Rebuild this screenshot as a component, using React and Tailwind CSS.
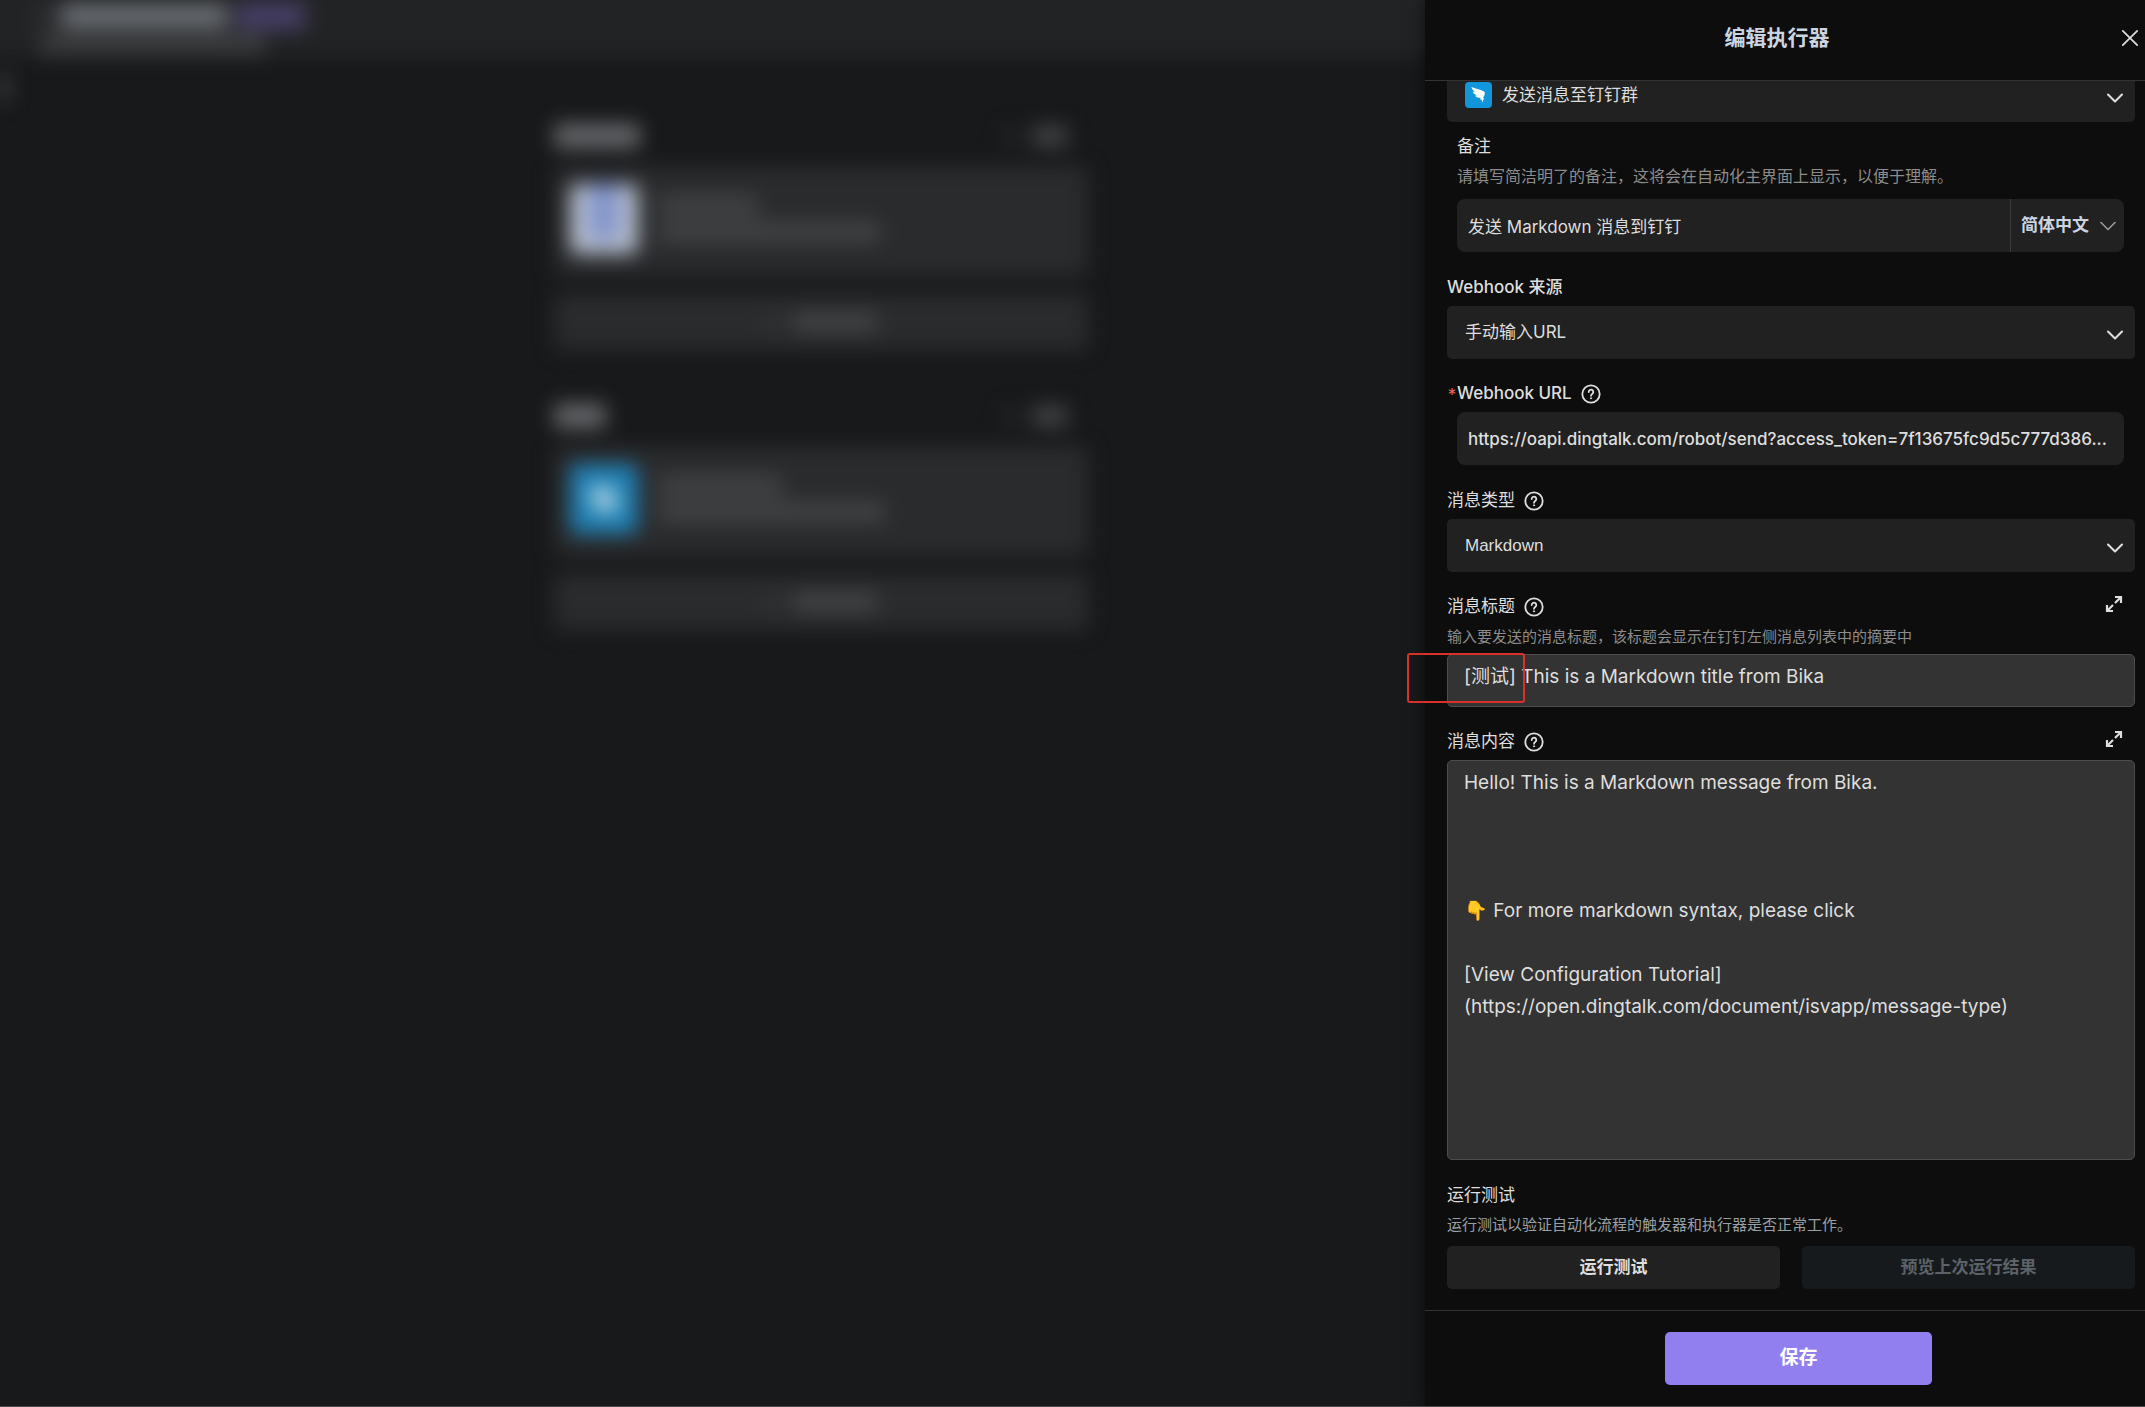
import { ChevronDown } from 'lucide-react';

const fieldBox = 'h-[53px] w-full bg-[#212121] text-[#dedede] outline-none';
const editorBox = 'mt-1.5 w-full rounded-[5px] border border-[#4d4d4d] bg-[#333] px-4 text-[19px] text-[#dedede] outline-none';

const MESSAGE = `Hello! This is a Markdown message from Bika.



👇 For more markdown syntax, please click

[View Configuration Tutorial]
(https://open.dingtalk.com/document/isvapp/message-type)`;

function HelpIcon() {
  return (
    <svg viewBox="0 0 20 20" className="h-5 w-5 shrink-0" fill="none" stroke="currentColor" strokeWidth="1.8" strokeLinecap="round" strokeLinejoin="round" aria-hidden="true">
      <circle cx="10" cy="10" r="8.7" />
      <path d="M7.7 8a2.3 2.3 0 1 1 3.7 1.8c-.9.7-1.4 1-1.4 2" />
      <circle cx="10" cy="14.3" r="0.6" fill="currentColor" strokeWidth="1" />
    </svg>
  );
}

function ExpandButton({ label }) {
  return (
    <button type="button" aria-label={label} className="mr-3 mb-1 text-[#dedede]">
      <svg viewBox="0 0 18 18" className="h-[18px] w-[18px]" fill="none" stroke="currentColor" strokeWidth="2.2" aria-hidden="true">
        <path d="M10 2h6v6M16 2l-6 6M8 16H2v-6M2 16l6-6" />
      </svg>
    </button>
  );
}

function DingTalkIcon() {
  return (
    <svg viewBox="0 0 27 26" className="h-[26px] w-[27px] shrink-0" aria-hidden="true">
      <rect width="27" height="26" rx="4" fill="#1296db" />
      <path
        d="M6.5 4.8C9.5 6.8 15 7.2 19 9.600c1.300.9 1 2.400.3 3.900L18 16l1.100.2-2.300 4.700.2-3.100-2-.2.8-1.800c-2.800.2-4.800-.5-5.800-2.300l2.300-.1C10 12.800 8.300 11.500 7.700 9.700l2.300.2C7.800 8.500 6.700 7 6.500 4.800z"
        fill="#fff"
      />
    </svg>
  );
}

function Label({ htmlFor, help, className = '', children }) {
  return (
    <label htmlFor={htmlFor} className={`flex h-[27px] items-center gap-[9px] pt-0.5 text-[17px] text-[#dedede] ${className}`}>
      {children}
      {help && <HelpIcon />}
    </label>
  );
}

function SelectField({ id, label, icon, value, className = '' }) {
  return (
    <div className="relative">
      <select id={id} aria-label={label} defaultValue={value} className={`${fieldBox} appearance-none rounded-[5px] pr-12 text-[17px] ${icon ? 'pl-[55px]' : 'pl-[18px]'} ${className}`}>
        <option>{value}</option>
      </select>
      {icon && <span className="pointer-events-none absolute top-[13px] left-[18px]">{icon}</span>}
      <ChevronDown className="pointer-events-none absolute top-[15px] right-1.5 h-7 w-7 text-[#dedede]" strokeWidth={1.8} />
    </div>
  );
}

function FlowSection({ titleWidth, icon, lines }) {
  return (
    <section>
      <div className="flex h-8 items-center justify-between pr-5">
        <div className={`h-6 rounded bg-[#66676a] ${titleWidth}`} />
        <div className="flex items-center gap-4">
          <div className="h-4 w-3 rounded bg-[#2a2b2d]" />
          <div className="h-5 w-9 rounded bg-[#434446]" />
        </div>
      </div>
      <div className="mt-[14px] flex h-[110px] items-center gap-5 rounded-lg bg-[#2a2b2d] pb-1 pl-4">
        {icon}
        <div className="space-y-1.5">
          {lines.map((line) => (
            <div key={line} className={`h-5 rounded bg-[#424345] ${line}`} />
          ))}
        </div>
      </div>
      <div className="mt-[18px] flex h-[56px] items-center justify-center gap-4 rounded-lg bg-[#2a2b2d]">
        <div className="h-3 w-3 rounded bg-[#38393b]" />
        <div className="h-5 w-[84px] rounded bg-[#424345]" />
      </div>
    </section>
  );
}

function AutomationBackdrop() {
  return (
    <main className="min-w-0 flex-1 overflow-hidden bg-[#18191b]" aria-hidden="true">
      <div className="h-full blur-[10px]">
        <header className="-mx-6 -mt-6 h-[82px] bg-[#222325] pt-[26px] pl-16">
          <div className="flex items-center gap-2">
            <div className="mr-1 h-5 w-2 rounded bg-[#3d3e40]" />
            <div className="h-6 w-[168px] rounded bg-[#6a6e73]" />
            <div className="h-7 w-[70px] rounded bg-[#443e64]" />
          </div>
          <div className="mt-1 h-5 w-[225px] rounded bg-[#3d3e40]" />
        </header>
        <div className="mt-4 h-7 w-2 bg-[#4a4b4d]" />
        <div className="mx-auto w-[534px] translate-x-[108px] space-y-[50px] pt-[18px]">
          <FlowSection
            titleWidth="w-[86px]"
            icon={
              <div className="flex h-[70px] w-[68px] justify-center rounded-lg bg-[#b8c0ce]">
                <div className="h-14 w-8 bg-[#8496cc]" />
              </div>
            }
            lines={['w-[100px]', 'w-[222px]']}
          />
          <FlowSection
            titleWidth="w-[52px]"
            icon={
              <div className="flex h-[70px] w-[68px] items-center justify-center rounded-lg bg-[#1f80b4]">
                <div className="h-8 w-6 -rotate-45 rounded-full bg-[#9fcbdf]" />
              </div>
            }
            lines={['w-[124px]', 'w-[226px]']}
          />
        </div>
      </div>
    </main>
  );
}

export default function App() {
  return (
    <div className="relative flex h-screen overflow-hidden border-b border-[#4a4a4a] bg-[#18191b] font-['Inter','Noto_Sans_CJK_SC',sans-serif]">
      <AutomationBackdrop />

      <aside className="relative flex w-[720px] shrink-0 flex-col bg-[#0d0d0d] shadow-[0_0_16px_rgba(0,0,0,0.6)]">
        <header className="flex h-[81px] shrink-0 items-center border-b border-[#333] pr-1.5 pb-1 pl-2">
          <h1 className="flex-1 text-center text-[21px] font-bold text-[#cbd5e1]">编辑执行器</h1>
          <button type="button" aria-label="关闭" className="text-[#e0e0e0]">
            <svg viewBox="0 0 18 18" className="h-[18px] w-[18px]" fill="none" stroke="currentColor" strokeWidth="1.7" strokeLinecap="round" aria-hidden="true">
              <path d="M1.8 1.8l14.4 14.4M16.2 1.8L1.8 16.2" />
            </svg>
          </button>
        </header>

        <form id="executor" className="flex min-h-0 flex-1 flex-col overflow-hidden pr-[10px] pl-[22px]">
          <div className="-mt-3 shrink-0">
            <SelectField label="执行器类型" value="发送消息至钉钉群" icon={<DingTalkIcon />} />
          </div>

          <div className="mt-[10px] pr-[11px] pl-[10px]">
            <Label htmlFor="remark">备注</Label>
            <p className="mt-[5px] text-[16px] leading-6 text-[#8c8c8c]">请填写简洁明了的备注，这将会在自动化主界面上显示，以便于理解。</p>
            <div className="mt-[11px] flex">
              <input id="remark" defaultValue="发送 Markdown 消息到钉钉" className={`${fieldBox} min-w-0 flex-1 rounded-l-lg pl-[11px] text-[17px]`} />
              <div className="relative shrink-0 border-l border-[#3a3a3a]">
                <select aria-label="语言" defaultValue="简体中文" className="h-[53px] w-[113px] appearance-none rounded-r-lg bg-[#212121] pl-[10px] text-[17px] font-bold text-[#cbd5e1] outline-none">
                  <option>简体中文</option>
                </select>
                <ChevronDown className="pointer-events-none absolute top-[13px] right-0.5 h-7 w-7 text-[#9a9a9a]" strokeWidth={1.4} />
              </div>
            </div>
          </div>

          <div className="mt-[21px]">
            <Label htmlFor="source" className="mb-1.5 font-medium">Webhook 来源</Label>
            <SelectField id="source" value="手动输入URL" />
          </div>

          <div className="mt-5 pr-[11px]">
            <div className="mb-1.5 flex items-center">
              <span className="w-[10px] pt-1 text-center text-[17px] leading-5 text-[#e5675f]">*</span>
              <Label htmlFor="url" help className="font-medium">Webhook URL</Label>
            </div>
            <div className="pl-[10px]">
              <input id="url" defaultValue="https://oapi.dingtalk.com/robot/send?access_token=7f13675fc9d5c777d386..." className={`${fieldBox} rounded-lg pr-1 pl-[11px] text-[17px] font-medium`} />
            </div>
          </div>

          <div className="mt-[21px]">
            <Label htmlFor="type" help className="mb-1.5">消息类型</Label>
            <SelectField id="type" value="Markdown" className="font-['Liberation_Sans',sans-serif]" />
          </div>

          <div className="mt-5">
            <div className="flex items-center justify-between">
              <Label htmlFor="title" help>消息标题</Label>
              <ExpandButton label="展开消息标题" />
            </div>
            <p className="mt-[7px] text-[15px] leading-[22px] text-[#8c8c8c]">输入要发送的消息标题，该标题会显示在钉钉左侧消息列表中的摘要中</p>
            <input id="title" defaultValue="[测试] This is a Markdown title from Bika" className={`${editorBox} h-[53px] pb-3`} />
          </div>

          <div className="mt-5 flex min-h-0 flex-1 flex-col">
            <div className="flex items-center justify-between">
              <Label htmlFor="content" help>消息内容</Label>
              <ExpandButton label="展开消息内容" />
            </div>
            <textarea id="content" defaultValue={MESSAGE} className={`${editorBox} min-h-0 flex-1 resize-none py-1.5 leading-8`} />
          </div>

          <div className="mt-[22px] pb-[21px]">
            <h2 className="text-[17px] leading-[26px] text-[#dedede]">运行测试</h2>
            <p className="mt-1.5 text-[15px] leading-[22px] text-[#9aa0a6]">运行测试以验证自动化流程的触发器和执行器是否正常工作。</p>
            <div className="mt-[10px] grid grid-cols-2 gap-[22px]">
              <button type="button" className="h-[43px] rounded-[5px] bg-[#212121] text-[17px] font-bold text-[#dedede]">运行测试</button>
              <button type="button" disabled className="h-[43px] rounded-[5px] bg-[#171a1c] text-[17px] font-bold text-[#5c6268]">预览上次运行结果</button>
            </div>
          </div>
        </form>

        <footer className="flex h-[96px] shrink-0 items-center justify-center border-t border-[#333] pl-[27px]">
          <button type="submit" form="executor" className="h-[53px] w-[267px] rounded-[5px] bg-[#917ff0] text-[19px] font-bold text-white">保存</button>
        </footer>

        {/* highlight round the test prefix of the message title */}
        <div className="pointer-events-none absolute top-[653px] -left-[18px] h-[50px] w-[118px] rounded-[3px] border-2 border-[#d9302a]" />
      </aside>
    </div>
  );
}
